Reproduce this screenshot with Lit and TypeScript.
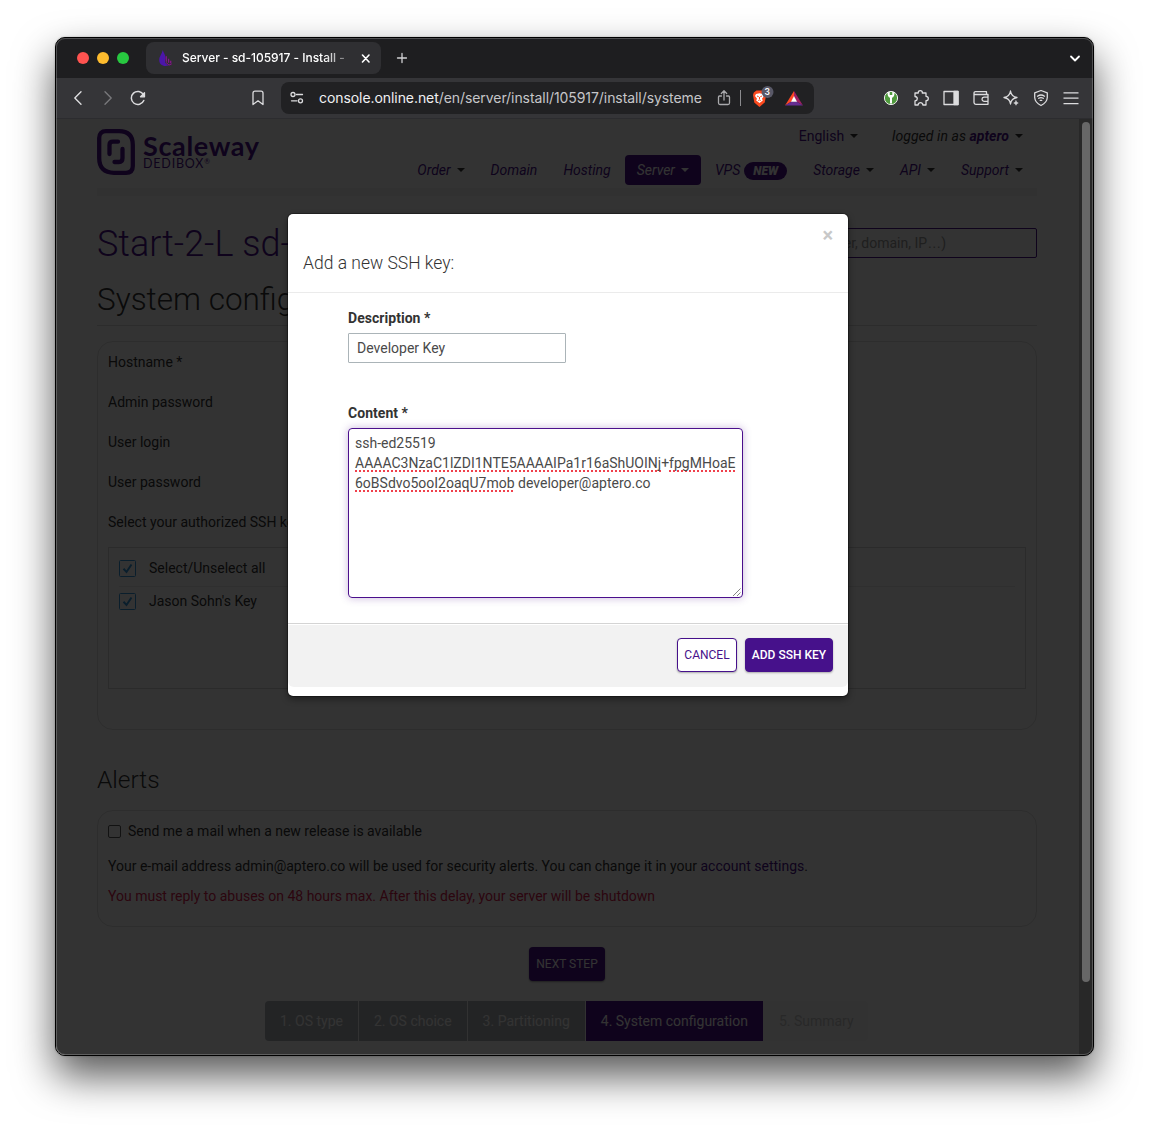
import { LitElement, html, css, svg, nothing } from "lit";
import { customElement } from "lit/decorators.js";
import { classMap } from "lit/directives/class-map.js";

interface NavItem {
  label: string;
  caret?: boolean;
  active?: boolean;
  badge?: string;
}

const NAV: NavItem[] = [
  { label: "Order", caret: true },
  { label: "Domain" },
  { label: "Hosting" },
  { label: "Server", caret: true, active: true },
  { label: "VPS", badge: "NEW" },
  { label: "Storage", caret: true },
  { label: "API", caret: true },
  { label: "Support", caret: true },
];

const STEPS = [
  { label: "1. OS type", state: "done" },
  { label: "2. OS choice", state: "done" },
  { label: "3. Partitioning", state: "done" },
  { label: "4. System configuration", state: "current" },
  { label: "5. Summary", state: "todo" },
];

const icon = (body: unknown, w = 18, h = 18) =>
  html`<svg class="icon" width=${w} height=${h} viewBox="0 0 ${w} ${h}" fill="none"
    stroke="currentColor" stroke-width="1.3" stroke-linecap="round" stroke-linejoin="round">${body}</svg>`;

/** Window chrome: tab strip and address bar. */
@customElement("browser-chrome")
class BrowserChrome extends LitElement {
  static styles = css`
    :host { display: block; font-family: Inter, "Liberation Sans", sans-serif; color: #fff; }
    .tabs { height: 40px; background: #1e1e20; display: flex; align-items: center; padding-left: 21px; padding-right: 12px; }
    .lights { display: flex; gap: 8px; width: 69px; }
    .light { width: 12px; height: 12px; border-radius: 50%; }
    .red { background: #ff5350; } .yellow { background: #febc2e; } .green { background: #28c840; }
    .tab { width: 235px; height: 32px; border-radius: 8px; background: #2f2f32; display: flex; align-items: center; padding: 0 9px 0 12px; box-sizing: border-box; }
    .title { flex: 1; margin: -1px 0 0 9px; font-size: 12px; font-weight: 500; white-space: nowrap; overflow: hidden; letter-spacing: -0.03px;
      -webkit-mask-image: linear-gradient(90deg, #000 142px, rgba(0,0,0,.4) 162px); }
    .icon { display: block; flex: none; }
    .plus { margin-left: 12px; color: #d2d2d4; }
    .grow { flex: 1; }
    .bar { height: 40px; background: #353538; border-bottom: 1px solid #2c2c2f; display: flex; align-items: center; padding: 0 13px; color: #dcdcde; }
    .nav { display: flex; gap: 12px; }
    .dim { color: #77777a; }
    .mark { margin-left: 102px; }
    .url { margin-left: 14px; width: 533px; height: 32px; box-sizing: border-box; border-radius: 8px; background: #212123; display: flex; align-items: center; padding: 0 10px 0 7px; }
    .address { margin: -2px 0 0 13px; width: 396px; font-size: 14px; white-space: nowrap; color: #c6c6c9; letter-spacing: -0.07px; }
    .host { color: #f0f0f2; }
    .sep { width: 1px; height: 16px; background: #8b8b8e; margin: 0 8px 0 7px; }
    .tools { display: flex; gap: 12px; }
  `;

  render() {
    return html`
      <div class="tabs">
        <div class="lights"><i class="light red"></i><i class="light yellow"></i><i class="light green"></i></div>
        <div class="tab">
          <svg class="icon" width="15" height="18" viewBox="0 0 15 18">
            <path d="M4.500 1C6.500 5 8.500 8 7 11.500C6.700 14 8.500 16 11 16.300C6 18.300 1.200 16 1.200 11C1.200 7 4.300 5 4.500 1Z" fill="#4b16a8"/>
            <path d="M8.300 7.300v5.500M10.600 9.700v4M12.700 11.700v2.500" stroke="#8b128f" stroke-width="1.200"/>
            <path d="M8 13.500l3 2.600 2.700-1.200" stroke="#8b128f" fill="none"/>
          </svg>
          <span class="title">Server - sd-105917 - Install -</span>
          ${icon(svg`<path d="M2.500 1l6.500 7M9 1l-6.500 7" stroke-width="1.600"/>`, 12, 9)}
        </div>
        <span class="plus">${icon(svg`<path d="M9 4.500v9M4.500 9h9"/>`)}</span>
        <span class="grow"></span>
        ${icon(svg`<path d="M2 2.500l4 4 4-4" stroke-width="1.800"/>`, 12, 9)}
      </div>
      <div class="bar">
        <div class="nav">
          ${icon(svg`<path d="M12 2.800L5.800 9l6.200 6.200" stroke-width="1.400"/>`)}
          <span class="dim">${icon(svg`<path d="M6 2.800l6.200 6.200L6 15.200" stroke-width="1.400"/>`)}</span>
          ${icon(svg`<path d="M14.800 11.500A6.500 6.500 0 1 1 14.500 5.800" stroke-width="1.500"/><path d="M15.500 3.800v4h-4z" fill="currentColor"/>`)}
        </div>
        <span class="mark">${icon(svg`<path d="M4 4.200Q4 2.200 6 2.200H12Q14 2.200 14 4.200V15.500L9 11.800L4 15.500Z"/>`)}</span>
        <div class="url">
          ${icon(svg`<circle cx="5" cy="5.500" r="2"/><path d="M8.500 5.500H14.500"/><circle cx="12.500" cy="11.800" r="2"/><path d="M3.500 11.800H9"/>`)}
          <span class="address"><span class="host">console.online.net</span>/en/server/install/105917/install/systeme</span>
          ${icon(svg`<path d="M6.500 7H4.500Q3.500 7 3.500 8V14Q3.500 15.500 5 15.500H13Q14.500 15.500 14.500 14V8Q14.500 7 13.500 7H11.500M9 11V2M6.300 4.500L9 1.800L11.700 4.500" stroke="#a9a9ac"/>`)}
          <i class="sep"></i>
          <svg class="icon" width="26" height="24" viewBox="0 0 26 24">
            <path d="M7.500 4.500h7l2 2 .7 2.500-1.500 7.500-5.200 4.500-5.200-4.500L4 9l.8-2.500z" fill="#fb4a1f"/>
            <path d="M7 8l3.500-.8L14 8l1 2-2 2.800.8 1.700-3.300 2.500-3.300-2.500.8-1.700L6 10z" fill="#fff"/>
            <path d="M8 10l1.700.7M13 10l-1.700.7M10.500 11v2M9.300 14.500l1.200-.6 1.200.6" stroke="#fb4a1f" fill="none"/>
            <circle cx="18.500" cy="6" r="6" fill="#595968"/>
            <text x="18.300" y="9" font-size="8.500" font-weight="600" font-family="Inter" fill="#fff" text-anchor="middle">3</text>
          </svg>
          <span class="grow"></span>
          <svg class="icon" width="20" height="18" viewBox="0 0 20 18">
            <path d="M10 2L1 16.500L7.500 12.500L10 8Z" fill="#ff4724"/>
            <path d="M10 2L19 16.500L12.500 12.500L10 8Z" fill="#9e1f63"/>
            <path d="M1 16.500H19L12.500 12.500H7.500Z" fill="#662d91"/>
            <path d="M10 7L13 12.700H7Z" fill="#fff"/>
          </svg>
        </div>
        <span class="grow"></span>
        <div class="tools">
          <svg class="icon" width="18" height="18" viewBox="0 0 18 18">
            <circle cx="9" cy="9" r="6.600" fill="#4f9a3d" stroke="#eee" stroke-width="1"/>
            <path d="M5.500 3.500Q5.500 8 8 8.800V14.500H10V8.800Q12.500 8 12.500 3.500L10.300 2.800V6H7.700V2.800Z" fill="#fff"/>
          </svg>
          ${icon(svg`<path d="M3 4H6.300Q6 1.700 8.300 1.700T10.300 4H14V7.300Q16.300 7.300 16.300 9.500T14 11.700V16H11Q10.500 13.700 8.500 13.700T6 16H3V12Q5.300 11.500 5.300 9.700T3 7.500Z"/>`)}
          ${icon(svg`<path d="M2 2.500h14v13H2z"/><path d="M12 2.500h4v13h-4z" fill="currentColor"/>`)}
          ${icon(svg`<path d="M14.500 5.500V2.700H3.500Q2 2.700 2 4V13.500Q2 15.300 3.800 15.300H16V5.500H3.500Q2 5.500 2 4.200M16 8.200H12Q10 8.500 10 10.200T12 12.300H16" />`)}
          ${icon(svg`<path d="M8.500 2Q9.300 7.700 15 8.500Q9.300 9.300 8.500 15Q7.700 9.300 2 8.500Q7.700 7.700 8.500 2Z"/><path d="M14 11.700l.7 1.600 1.600.7-1.600.7-.7 1.600-.7-1.600-1.600-.7 1.600-.7z" fill="currentColor" stroke-width=".5"/>`)}
          ${icon(svg`<path d="M9 1.500L15.300 3.800V8.500Q15 13.500 9 16.500Q3 13.500 2.700 8.500V3.800Z"/><path d="M5.500 7.200Q9 4.800 12.500 7.200M6.700 9.300Q9 7.800 11.300 9.300M8.200 11.300h1.600"/>`)}
          ${icon(svg`<path d="M1.500 3.800h15M1.500 9.200h15M1.500 14.600h15" stroke-linecap="butt"/>`)}
        </div>
      </div>
    `;
  }
}

/** Server console page shown underneath the dialog. */
@customElement("console-page")
class ConsolePage extends LitElement {
  static styles = css`
    :host { display: block; font-family: Roboto, "Open Sans", sans-serif; font-size: 14px; line-height: 20px; color: #333; background: #fff; }
    .wrap { width: 940px; margin-left: 40px; }
    .header { display: flex; justify-content: space-between; height: 69px; padding-top: 0; }
    .logo { display: flex; gap: 8px; margin-top: 10px; height: 46px; color: #4b0f8c; }
    .brand { font-family: Lato, sans-serif; }
    .name { font-size: 27px; line-height: 26px; font-weight: 700; margin-top: 4px; letter-spacing: 0.65px; }
    .sub { font-size: 12.500px; line-height: 12px; margin-top: -1px; letter-spacing: 0.8px; }
    .reg { font-size: 7px; line-height: 0; vertical-align: 4px; }
    .menus { display: flex; flex-direction: column; align-items: flex-end; margin-right: 2px; color: #4b0f8c; }
    .user { display: flex; gap: 34px; margin-top: 7px; margin-right: 12px; }
    .i { font-style: italic; letter-spacing: 0.05px; }
    .who { color: #333; }
    .who b { color: #4b0f8c; }
    .caret { display: inline-block; border: 4px solid transparent; border-top-color: #333; border-bottom: 0; margin-left: 6px; vertical-align: 3px; }
    .nav { display: flex; gap: 2px; margin-top: 9px; font-style: italic; }
    .item { height: 30px; line-height: 30px; padding: 0 12px; border-radius: 4px; white-space: nowrap; }
    .active { background: #4b0f8c; color: #fff; }
    .active .caret { border-top-color: #fff; }
    .badge { display: inline-block; background: #4b0f8c; color: #fff; font-weight: 900; font-size: 12px; line-height: 18px; height: 18px; width: 43px; text-align: center; border-radius: 9px; margin-left: 4px; }
    .band { height: 8px; background: #f6f6f6; }
    .title { display: flex; justify-content: space-between; margin-top: 32px; height: 40px; }
    h1, h2, h3 { font-weight: 300; margin: 0; white-space: nowrap; }
    h1 { font-size: 36px; line-height: 32px; color: #4b0f8c; }
    .search { box-sizing: border-box; width: 300px; height: 30px; border: 1px solid #4b0f8c; border-radius: 2px; line-height: 28px; color: #999; padding-right: 90px; text-align: right; white-space: nowrap; }
    .dots { font-family: "Liberation Sans", sans-serif; }
    h2 { font-size: 31.500px; line-height: 40px; margin-top: 11px; padding-top: 1px; height: 45px; border-bottom: 1px solid #ddd; }
    .card { box-sizing: border-box; border: 1px solid #e0e0e0; border-radius: 16px; padding: 0 10px; }
    .config { margin-top: 15px; height: 389px; padding-top: 10px; }
    .row { height: 40px; line-height: 20px; }
    .row.last { height: 35px; }
    .keys { box-sizing: border-box; height: 142px; border: 1px solid #d8d8d8; padding: 8px 10px; }
    .key { display: flex; align-items: center; height: 26px; padding-bottom: 4px; gap: 13px; }
    .key + .key { border-top: 1px solid #ebebeb; padding-top: 2px; }
    .key span { margin-top: -2px; }
    .box { display: block; flex: none; }
    h3 { font-size: 24.500px; line-height: 40px; margin-top: 30px; height: 50px; }
    .alerts { height: 117px; padding-top: 10px; }
    .mail { display: flex; align-items: center; gap: 7px; height: 20px; }
    .tick { width: 13px; height: 13px; box-sizing: border-box; border: 1px solid #5a5a5a; border-radius: 2px; }
    .info { margin-top: 15px; }
    .info a { color: #4b0f8c; }
    .warn { margin-top: 10px; color: #d9214e; }
    .next { width: 76px; height: 34px; line-height: 34px; margin: 20px auto 0; text-align: center; background: #4b0f8c; color: #fff; font-size: 12px; border-radius: 4px; box-shadow: 0 1px 2px rgba(0,0,0,.4); }
    .steps { display: flex; margin: 20px 0 0 168px; width: 603px; height: 40px; line-height: 40px; border-radius: 4px; overflow: hidden; background: #fafafa; gap: 1px; }
    .step { padding: 0 15px; white-space: nowrap; }
    .done { background: #afb4b8; color: #fff; }
    .current { background: #4b0f8c; color: #fff; }
    .todo { color: #c8c8c8; }
  `;

  private checkbox() {
    return html`<svg class="box" width="17" height="18" viewBox="0 0 17 18" fill="none" stroke="#3498db">
      <rect x=".5" y=".5" width="16" height="16" rx="1"/><path d="M4.500 8.800l3 3.200 5-7.500" stroke-width="2"/></svg>`;
  }

  render() {
    return html`
      <div class="wrap">
        <div class="header">
          <div class="logo">
            <svg width="38" height="46" viewBox="0 0 38 46" fill="none" stroke="currentColor" stroke-width="4.300" stroke-linecap="round">
              <path d="M9 2.200H22Q35.800 2.200 35.800 16V37Q35.800 43.800 29 43.800H17Q2.200 43.800 2.200 29V9Q2.200 2.200 9 2.200Z"/>
              <path d="M12.500 25V16Q12.500 12.700 16 12.700H21M25.500 20V29Q25.500 33 22 33H17.500"/>
            </svg>
            <div class="brand"><div class="name">Scaleway</div><div class="sub">DEDIBOX<span class="reg">®</span></div></div>
          </div>
          <div class="menus">
            <div class="user">
              <span>English<i class="caret"></i></span>
              <span class="who i">logged in as <b>aptero</b><i class="caret"></i></span>
            </div>
            <div class="nav">
              ${NAV.map((n) => html`<div class=${classMap({ item: true, active: !!n.active })}>${n.label}${n.badge
                ? html`<span class="badge">${n.badge}</span>` : nothing}${n.caret ? html`<i class="caret"></i>` : nothing}</div>`)}
            </div>
          </div>
        </div>
        <div class="band"></div>
        <div class="title"><h1>Start-2-L sd-105917</h1><div class="search">Search (server, domain, IP<span class="dots">…</span>)</div></div>
        <h2>System configuration</h2>
        <div class="card config">
          <div class="row">Hostname *</div>
          <div class="row">Admin password</div>
          <div class="row">User login</div>
          <div class="row">User password</div>
          <div class="row last">Select your authorized SSH keys</div>
          <div class="keys">
            <div class="key">${this.checkbox()}<span>Select/Unselect all</span></div>
            <div class="key">${this.checkbox()}<span>Jason Sohn's Key</span></div>
          </div>
        </div>
        <h3>Alerts</h3>
        <div class="card alerts">
          <div class="mail"><i class="tick"></i><span>Send me a mail when a new release is available</span></div>
          <div class="info">Your e-mail address admin@aptero.co will be used for security alerts. You can change it in your <a>account settings</a>.</div>
          <div class="warn">You must reply to abuses on 48 hours max. After this delay, your server will be shutdown</div>
        </div>
        <div class="next">NEXT STEP</div>
        <div class="steps">${STEPS.map((s) => html`<div class="step ${s.state}">${s.label}</div>`)}</div>
      </div>
    `;
  }
}

/** "Add a new SSH key" dialog. */
@customElement("ssh-dialog")
class SshDialog extends LitElement {
  static styles = css`
    :host { display: block; box-sizing: border-box; width: 560px; height: 482px; background: #fff; border-radius: 5px; box-shadow: 0 0 0 1px rgba(0,0,0,.3), 0 3px 7px rgba(0,0,0,.45);
      font-family: Roboto, "Open Sans", sans-serif; font-size: 14px; line-height: 20px; color: #333; overflow: visible; }
    .head { box-sizing: border-box; height: 79px; padding: 11px 15px 0; border-bottom: 1px solid #ebebeb; }
    .close { height: 20px; line-height: 20px; text-align: right; font-size: 20px; font-weight: 700; color: #c8c8c8; }
    .title { margin-top: 8px; font-size: 17.500px; font-weight: 300; line-height: 20px; }
    .body { box-sizing: border-box; padding: 15px 60px 0; height: 330px; }
    .label { font-weight: 700; letter-spacing: 0.04px; }
    .input { box-sizing: border-box; width: 218px; height: 30px; border: 1px solid #abb4b8; border-radius: 1px; padding: 0 8px; line-height: 28px; margin: 5px 0 40px; color: #4a4a4a; }
    .area { position: relative; box-sizing: border-box; width: 395px; height: 170px; margin-top: 5px; border: 1px solid #4b0f8c; border-radius: 4px; padding: 4px 6px; color: #4a4a4a; box-shadow: 0 0 8px rgba(75,15,140,.3); white-space: nowrap; }
    .sp { background: repeating-linear-gradient(90deg, #f0404c 0 2px, transparent 2px 4px) 0 100% / 100% 2px no-repeat; padding-bottom: 1px; }
    .grip { position: absolute; right: 0; bottom: 0; }
    .foot { box-sizing: border-box; height: 64px; border-top: 1px solid #d4d4d4; box-shadow: inset 0 1px 0 #fff; background: #f2f2f2; border-radius: 0 0 6px 6px; display: flex; justify-content: flex-end; gap: 8px; padding: 14px 15px 0; }
    .btn { box-sizing: border-box; height: 34px; line-height: 32px; border: 1px solid #46118b; border-radius: 4px; font-size: 12px; text-align: center; box-shadow: 0 1px 2px rgba(0,0,0,.3); white-space: nowrap; }
    .cancel { width: 60px; background: #fff; color: #46118b; }
    .add { width: 88px; background: #46118b; color: #fff; font-weight: 500; }
  `;

  render() {
    return html`
      <div class="head"><div class="close">×</div><div class="title">Add a new SSH key:</div></div>
      <div class="body">
        <div class="label">Description *</div>
        <div class="input">Developer Key</div>
        <div class="label">Content *</div>
        <div class="area">ssh-ed25519<br><span class="sp">AAAAC3NzaC1lZDI1NTE5AAAAIPa1r16aShUOINj</span>+<span class="sp">fpgMHoaE</span><br><span class="sp">6oBSdvo5ooI2oaqU7mob</span> developer@aptero.co
          <svg class="grip" width="10" height="10" viewBox="0 0 10 10" stroke="#777" stroke-width=".9"><path d="M1 9L8.500 1.500M5 9L8.500 5.500"/></svg>
        </div>
      </div>
      <div class="foot"><div class="btn cancel">CANCEL</div><div class="btn add">ADD SSH KEY</div></div>
    `;
  }
}

@customElement("app-root")
class AppRoot extends LitElement {
  static styles = css`
    :host { display: block; box-sizing: border-box; width: 1149px; height: 1129px; padding: 37px 0 0 55px; background: #fff; overflow: hidden; }
    .window { position: relative; box-sizing: border-box; width: 1039px; height: 1019px; border: 1px solid #000; border-radius: 10px; background: #333; box-shadow: 0 20px 40px rgba(0,0,0,.66), 0 0 2px rgba(0,0,0,.3); }
    .clip { height: 1017px; border-radius: 9px; overflow: hidden; display: flex; flex-direction: column; }
    .rim { position: absolute; inset: 0; border-radius: 9px; box-shadow: inset 0 0 0 1px rgba(255,255,255,.22); pointer-events: none; }
    .view { flex: 1; display: flex; min-height: 0; position: relative; }
    .page { flex: 1; background: #fff; overflow: hidden; padding-left: 1px; }
    .shade { position: absolute; inset: 0 14px 0 0; background: rgba(0,0,0,.8); }
    .dialog { position: absolute; left: 232px; top: 95px; }
    .track { width: 14px; background: #282828; }
    .thumb { width: 8px; height: 860px; margin: 3px 0 0 3px; border-radius: 4px; background: #676767; }
  `;

  render() {
    return html`
      <div class="window">
        <div class="clip">
          <browser-chrome></browser-chrome>
          <div class="view">
            <div class="page"><console-page></console-page></div>
            <div class="track"><div class="thumb"></div></div>
            <div class="shade"></div>
            <ssh-dialog class="dialog"></ssh-dialog>
          </div>
        </div>
        <div class="rim"></div>
      </div>
    `;
  }
}
